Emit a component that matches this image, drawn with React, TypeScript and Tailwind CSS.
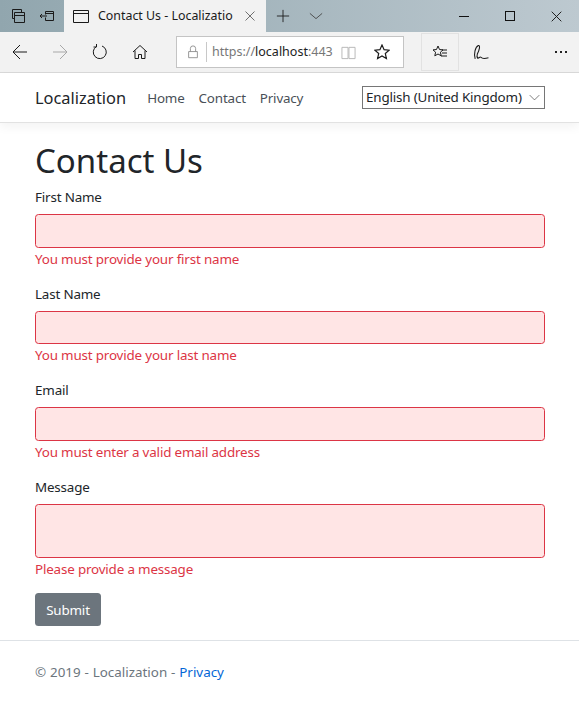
import React from 'react';

const FONT = "font-['Noto_Sans',sans-serif]";
const BODY = 'text-[13.4px] tracking-[-0.17px]';

const Icon = ({ className, children }: { className?: string; children: React.ReactNode }) => (
  <svg viewBox="0 0 16 16" fill="none" stroke="currentColor" strokeWidth="1" className={className}>
    {children}
  </svg>
);

const Field = ({ label, error, tall }: { label: string; error: string; tall?: boolean }) => (
  <div className="mb-[14px]">
    <label className={`block ${BODY} h-[21px] leading-[23px] mb-[7px] text-[#212529]`}>{label}</label>
    {tall ? (
      <textarea className="block w-full h-[54px] rounded-[3.5px] border border-[#dc3545] bg-[#ffe5e5] resize-none" />
    ) : (
      <input className="block w-full h-[33.5px] rounded-[3.5px] border border-[#dc3545] bg-[#ffe5e5]" />
    )}
    <div className={`${BODY} h-[21px] leading-[23px] text-[#dc3545]`}>{error}</div>
  </div>
);

export default function App() {
  return (
    <div className={`${FONT} w-[579px] h-[701px] bg-white overflow-hidden`}>
      {/* title bar */}
      <div className="flex h-[32px] bg-gradient-to-r from-[#91a6ae] to-[#bdc9d0] text-[#1a1a1a]">
        <div className="flex w-[64px] items-center justify-around px-[3px]">
          <Icon className="w-[16px] h-[16px]">
            <path d="M2.5 1.5h9v3M2.5 1.5v9h2M4.5 4.5h10v10h-10zM4.5 7.5h10" />
          </Icon>
          <Icon className="w-[16px] h-[16px]">
            <path d="M6.5 3.5h8v9h-8v-3M6.5 3.5v3M6.5 5.5h8M1 8h7M3 6l-2 2 2 2" />
          </Icon>
        </div>
        <div className="flex w-[202px] items-center bg-[#f2f2f2] pl-[9px]">
          <Icon className="w-[16px] h-[16px] shrink-0">
            <path d="M.5 2.5h15v12H.5zM.5 5.5h15" />
          </Icon>
          <span className="ml-[9px] w-[136px] whitespace-nowrap text-[12.4px]">Contact Us - Localizatio</span>
          <Icon className="ml-[10px] w-[12px] h-[12px] shrink-0 text-[#444]">
            <path d="M2 2l12 12M14 2L2 14" />
          </Icon>
        </div>
        <div className="flex w-[64px] items-center justify-between pl-[10px] pr-[7px]">
          <Icon className="w-[14px] h-[14px]">
            <path d="M8 1v14M1 8h14" />
          </Icon>
          <Icon className="w-[14px] h-[14px] text-[#444]">
            <path d="M1 5l7 6 7-6" />
          </Icon>
        </div>
        <div className="ml-auto flex">
          <div className="flex w-[46px] items-center justify-center">
            <div className="w-[10px] h-[1px] bg-[#111]" />
          </div>
          <div className="flex w-[46px] items-center justify-center">
            <div className="w-[10px] h-[10px] border border-[#111]" />
          </div>
          <div className="flex w-[46px] items-center justify-center">
            <Icon className="w-[11px] h-[11px]">
              <path d="M1 1l14 14M15 1L1 15" strokeWidth="1.4" />
            </Icon>
          </div>
        </div>
      </div>

      {/* toolbar */}
      <div className="flex h-[41px] items-center border-b border-[#d9d9d9] bg-[#f2f2f2] text-[#1a1a1a]">
        <div className="flex w-[160px] items-center pl-[12px] gap-[24px]">
          <Icon className="w-[16px] h-[16px]">
            <path d="M15 8H1M8 1L1 8l7 7" />
          </Icon>
          <Icon className="w-[16px] h-[16px] text-[#a8a8a8]">
            <path d="M1 8h14M8 1l7 7-7 7" />
          </Icon>
          <Icon className="w-[16px] h-[16px]">
            <path d="M4.5 2.5A6.5 6.5 0 1 0 10 2M4.5 0v3H1.5" />
          </Icon>
          <Icon className="w-[16px] h-[16px]">
            <path d="M1 8l7-6.5L15 8M3 6.5v8h3.5v-4h3v4H13v-8" />
          </Icon>
        </div>
        <div className="ml-[16px] flex h-[32px] w-[228px] items-center border border-[#c4c4c4] bg-white">
          <Icon className="ml-[9px] w-[14px] h-[14px] text-[#8a8a8a]">
            <path d="M3 7.5h10v7H3zM5 7.5V4a3 3 0 0 1 6 0v3.5" />
          </Icon>
          <div className="ml-[6px] w-px h-[20px] bg-[#c8c8c8]" />
          <span className="ml-[5px] w-[120px] whitespace-nowrap text-[12.5px] text-[#777]">
            https://<span className="text-[#222]">localhost</span>:443
          </span>
          <Icon className="ml-[9px] w-[15px] h-[15px] text-[#b5b5b5]">
            <path d="M1 2.5h6.5v12H1zM8.5 2.5H15v12H8.5z" />
          </Icon>
          <Icon className="ml-[18px] w-[16px] h-[16px]">
            <path d="M8 1l2.100 4.700 5 .5-3.800 3.300 1.100 5L8 11.900 3.600 14.500l1.100-5L.9 6.200l5-.5z" strokeWidth="1.2" />
          </Icon>
        </div>
        <div className="ml-[17px] flex h-[38px] w-[38px] items-center justify-center border border-[#e2e2e2]">
          <Icon className="w-[16px] h-[16px]">
            <path d="M6 2l1.500 3.500 3.500.4-2.600 2.300.8 3.600L6 10l-3.200 1.800.8-3.600L1 5.900l3.500-.4zM10 6h5M10 9h5M9 12h6" />
          </Icon>
        </div>
        <Icon className="ml-[13px] w-[17px] h-[17px]">
          <path d="M3 14C1.500 9 3 3 6 1.500c2-.5 1 4-1 8-.5 1.500-.5 3 .5 4 1.500-.5 2-2 3-1 1 1.500 3 1.500 7 .5" />
        </Icon>
        <div className="ml-auto mr-[12px] flex gap-[3px]">
          <div className="w-[2px] h-[2px] bg-[#222]" />
          <div className="w-[2px] h-[2px] bg-[#222]" />
          <div className="w-[2px] h-[2px] bg-[#222]" />
        </div>
      </div>

      {/* navbar */}
      <nav className="flex h-[50px] items-center border-b border-[#e2e2e2] bg-white pl-[35px] pr-[34px] shadow-[0_4px_10px_rgba(0,0,0,0.05)]">
        <span className="pt-[2px] text-[16.4px] text-[#212529]">Localization</span>
        <div className={`ml-[21px] flex gap-[14px] pt-[1px] ${BODY} text-[#495057]`}>
          <span>Home</span>
          <span>Contact</span>
          <span>Privacy</span>
        </div>
        <div className={`ml-auto flex h-[23px] w-[183px] items-center justify-between border border-[#767676] pl-[3px] pr-[4px] ${BODY} text-[#212529]`}>
          <span className="whitespace-nowrap">English (United Kingdom)</span>
          <Icon className="w-[11px] h-[11px] shrink-0 text-[#444]">
            <path d="M1 4.500l7 7 7-7" />
          </Icon>
        </div>
      </nav>

      {/* form */}
      <main className="pl-[35px] pr-[34px]">
        <h1 className="mt-[17px] text-[33px] leading-[42px] text-[#212529]">Contact Us</h1>
        <form className="mt-[4px]">
          <Field label="First Name" error="You must provide your first name" />
          <Field label="Last Name" error="You must provide your last name" />
          <Field label="Email" error="You must enter a valid email address" />
          <Field label="Message" error="Please provide a message" tall />
          <button type="button" className={`h-[33.5px] w-[66px] rounded-[3.5px] bg-[#6c757d] pt-[1px] ${BODY} text-white`}>
            Submit
          </button>
        </form>
      </main>

      {/* footer */}
      <footer className="mt-[14px] border-t border-[#dee2e6] px-[35px] pt-[21px] text-[13.4px] [word-spacing:0.4px] leading-[21px] text-[#6c757d]">
        © 2019 - Localization - <span className="text-[#0366d6]">Privacy</span>
      </footer>
    </div>
  );
}
